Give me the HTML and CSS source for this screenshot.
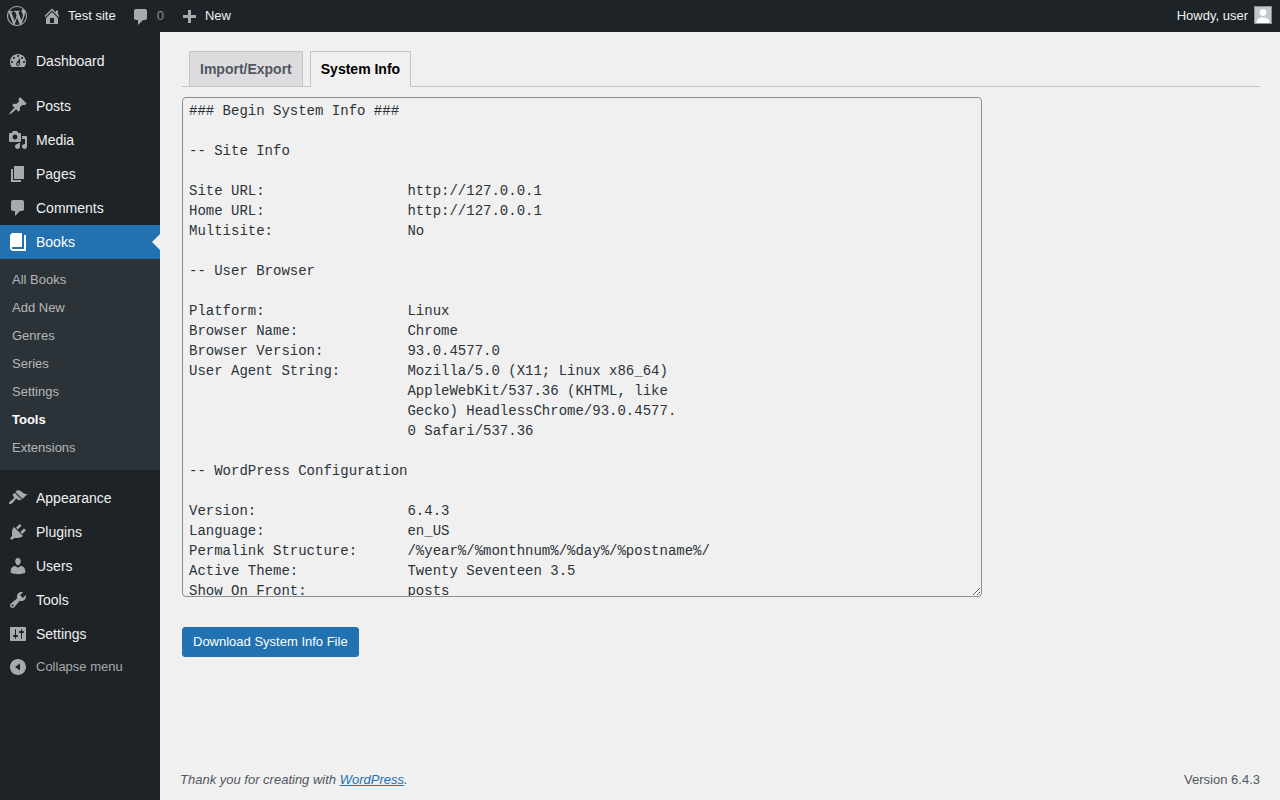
FILE: index.html
```html
<!DOCTYPE html>
<html>
<head>
  <meta charset="utf-8">
  <meta name="viewport" content="width=device-width, initial-scale=1.0">
  <title>System Info - Test site</title>
  <link rel="stylesheet" href="styles.css">
</head>
<body>
  <header class="adminbar">
    <a class="bar-item bar-logo" href="#">
      <svg class="bar-icon logo-icon" viewBox="0 0 20 20"><path d="M20 10c0-5.51-4.49-10-10-10C4.48 0 0 4.49 0 10c0 5.52 4.48 10 10 10 5.51 0 10-4.48 10-10zM7.78 15.37L4.37 6.22c.55-.02 1.17-.08 1.17-.08.5-.06.44-1.13-.06-1.11 0 0-1.45.11-2.37.11-.18 0-.37 0-.58-.01C4.12 2.69 6.87 1.11 10 1.11c2.33 0 4.45.87 6.05 2.34-.68-.11-1.65.39-1.65 1.58 0 .74.45 1.36.9 2.1.35.61.55 1.36.55 2.46 0 1.49-1.4 5-1.4 5l-3.03-8.37c.54-.02.82-.17.82-.17.5-.05.44-1.25-.06-1.22 0 0-1.44.12-2.38.12-.87 0-2.33-.12-2.33-.12-.5-.03-.56 1.2-.06 1.22l.92.08 1.26 3.41zM17.41 10c.24-.64.74-1.87.43-4.25.7 1.29 1.05 2.71 1.05 4.25 0 3.29-1.73 6.24-4.4 7.78.97-2.59 1.94-5.2 2.92-7.78zM6.1 18.09C3.12 16.65 1.11 13.53 1.11 10c0-1.3.23-2.48.72-3.59C3.25 10.3 4.67 14.2 6.1 18.09zm4.03-6.63l2.58 6.98c-.86.29-1.76.45-2.71.45-.79 0-1.57-.11-2.29-.33.81-2.38 1.62-4.74 2.42-7.1z"/></svg>
    </a>
    <a class="bar-item bar-site" href="#">
      <svg class="bar-icon" viewBox="0 0 20 20"><path fill-rule="evenodd" d="M16 8.5l1.53 1.53-1.06 1.06L10 4.62l-6.47 6.47-1.06-1.06L10 2.5l4 4v-2h2v4zm-6-2.46l6 5.99V18H4v-5.97zM12 17v-5H8v5h4z"/></svg>
      Test site
    </a>
    <a class="bar-item bar-comments" href="#">
      <svg class="bar-icon" viewBox="0 0 20 20"><path d="M5 2h9c1.1 0 2 .9 2 2v7c0 1.1-.9 2-2 2h-2l-5 5v-5H5c-1.1 0-2-.9-2-2V4c0-1.1.9-2 2-2z"/></svg>
      <span class="bar-count">0</span>
    </a>
    <a class="bar-item bar-new" href="#">
      <svg class="bar-icon" viewBox="0 0 20 20"><path d="M17 7v3h-5v5H9v-5H4V7h5V2h3v5h5z"/></svg>
      New
    </a>
    <a class="bar-item bar-account" href="#">
      Howdy, user
      <svg class="avatar" viewBox="0 0 16 16"><rect width="16" height="16" fill="#c6c7c9"/><circle cx="8" cy="5.6" r="3.3" fill="#fff"/><path d="M1.5 16c0-4 2.6-5.6 6.5-5.6s6.5 1.6 6.5 5.6z" fill="#fff"/></svg>
    </a>
  </header>

  <div class="layout">
    <nav class="sidebar">
      <ul class="menu">
        <li class="menu-item"><svg class="menu-icon" viewBox="0 0 20 20"><path fill-rule="evenodd" d="M3.76 16h12.48c1.1-1.37 1.76-3.11 1.76-5 0-4.42-3.58-8-8-8s-8 3.58-8 8c0 1.89.66 3.63 1.76 5zM10 4c.55 0 1 .45 1 1s-.45 1-1 1-1-.45-1-1 .45-1 1-1zM6 6c.55 0 1 .45 1 1s-.45 1-1 1-1-.45-1-1 .45-1 1-1zm8 0c.55 0 1 .45 1 1s-.45 1-1 1-1-.45-1-1 .45-1 1-1zm-5.37 5.55L12 7v6c0 1.1-.9 2-2 2s-2-.9-2-2c0-.57.24-1.08.63-1.45zM4 10c.55 0 1 .45 1 1s-.45 1-1 1-1-.45-1-1 .45-1 1-1zm12 0c.55 0 1 .45 1 1s-.45 1-1 1-1-.45-1-1 .45-1 1-1zm-5 3c0-.55-.45-1-1-1s-1 .45-1 1 .45 1 1 1 1-.45 1-1z"/></svg>Dashboard</li>
        <li class="menu-sep"></li>
        <li class="menu-item"><svg class="menu-icon" viewBox="0 0 20 20"><path d="M10.44 3.02l1.82-1.82 6.36 6.35-1.83 1.82c-1.05-.68-2.48-.57-3.41.36l-.75.75c-.92.93-1.04 2.35-.35 3.41l-1.83 1.82-2.41-2.41-2.8 2.79c-.42.42-3.38 2.71-3.8 2.29s1.86-3.39 2.28-3.81l2.79-2.79L4.1 9.36l1.83-1.82c1.05.69 2.48.57 3.4-.36l.75-.75c.93-.92 1.05-2.35.36-3.41z"/></svg>Posts</li>
        <li class="menu-item"><svg class="menu-icon" viewBox="0 0 20 20"><path fill-rule="evenodd" d="M13 11V4c0-.55-.45-1-1-1h-1.67L9 1H5L3.67 3H2c-.55 0-1 .45-1 1v7c0 .55.45 1 1 1h10c.55 0 1-.45 1-1zM7 4.5c1.38 0 2.5 1.12 2.5 2.5S8.38 9.5 7 9.5 4.5 8.38 4.5 7 5.62 4.5 7 4.5zM14 6h5v10.5c0 1.38-1.12 2.5-2.5 2.5S14 17.88 14 16.5s1.12-2.5 2.5-2.5c.17 0 .34.02.5.05V9h-3V6zm-4 8.05V13h2v3.5c0 1.38-1.12 2.5-2.5 2.5S7 17.88 7 16.5 8.12 14 9.5 14c.17 0 .34.02.5.05z"/></svg>Media</li>
        <li class="menu-item"><svg class="menu-icon" viewBox="0 0 20 20"><path d="M6 15V2h10v13H6zm-1 1h8v2H3V5h2v11z"/></svg>Pages</li>
        <li class="menu-item"><svg class="menu-icon" viewBox="0 0 20 20"><path d="M5 2h9c1.1 0 2 .9 2 2v7c0 1.1-.9 2-2 2h-2l-5 5v-5H5c-1.1 0-2-.9-2-2V4c0-1.1.9-2 2-2z"/></svg>Comments</li>
        <li class="menu-item menu-current"><svg class="menu-icon" viewBox="0 0 20 20"><path d="M16 3h2v16H5c-1.66 0-3-1.34-3-3V4c0-1.66 1.34-3 3-3h9v14H5c-.55 0-1 .45-1 1s.45 1 1 1h11V3z"/></svg>Books</li>
        <li>
          <ul class="submenu">
            <li>All Books</li>
            <li>Add New</li>
            <li>Genres</li>
            <li>Series</li>
            <li>Settings</li>
            <li class="submenu-current">Tools</li>
            <li>Extensions</li>
          </ul>
        </li>
        <li class="menu-sep"></li>
        <li class="menu-item"><svg class="menu-icon" viewBox="0 0 20 20"><path d="M14.48 11.06L7.41 3.99l1.5-1.5c.5-.56 2.3-.47 3.51.32 1.21.8 1.43 1.28 2.91 2.1 1.18.64 2.45 1.26 4.45.85zm-.71.71L6.7 4.7 4.93 6.47c-.39.39-.39 1.02 0 1.41l1.06 1.06c.39.39.39 1.03 0 1.42-.6.6-1.43 1.11-2.21 1.69-.35.26-.7.53-1.01.84C1.43 13.23.4 14.89 1.3 15.8c.9.91 2.53-.22 3.89-1.59.3-.31.6-.66.87-1.02.57-.78 1.07-1.6 1.67-2.21.39-.39 1.03-.39 1.42 0l1.06 1.07c.39.39 1.02.39 1.41 0z"/></svg>Appearance</li>
        <li class="menu-item"><svg class="menu-icon" viewBox="0 0 20 20"><path d="M13.11 4.36L9.87 7.6 8 5.73l3.24-3.24c.35-.34 1.05-.2 1.56.32.52.51.66 1.21.31 1.55zm-8 1.77l.91-1.12 9.01 9.01-1.19.84c-.71.71-2.63 1.16-3.82 1.16H6.14L4.9 17.26c-.59.59-1.54.59-2.12 0-.59-.58-.59-1.53 0-2.12l1.24-1.24v-3.88c0-1.13.4-3.19 1.09-3.89zm7.26 3.97l3.24-3.24c.34-.35 1.04-.21 1.55.31.52.51.66 1.21.31 1.55l-3.24 3.25z"/></svg>Plugins</li>
        <li class="menu-item"><svg class="menu-icon" viewBox="0 0 20 20"><path d="M10 9.25c-2.27 0-2.73-3.44-2.73-3.44C7 4.02 7.82 2 9.97 2c2.16 0 2.98 2.02 2.71 3.81 0 0-.41 3.44-2.68 3.44zm0 2.57L12.72 10c2.39 0 4.52 2.33 4.52 4.53v2.49s-3.65 1.13-7.24 1.13c-3.65 0-7.24-1.13-7.24-1.13v-2.49c0-2.25 1.94-4.48 4.47-4.48z"/></svg>Users</li>
        <li class="menu-item"><svg class="menu-icon" viewBox="0 0 20 20"><path fill-rule="evenodd" d="M16.68 9.77c-1.34 1.34-3.3 1.67-4.95.99l-5.41 6.52c-.99.99-2.59.99-3.58 0s-.99-2.59 0-3.57l6.52-5.42c-.68-1.65-.35-3.61.99-4.95 1.28-1.28 3.12-1.62 4.72-1.06l-2.89 2.89 2.82 2.82 2.86-2.87c.53 1.58.18 3.39-1.08 4.65zM3.81 16.21c.4.39 1.04.39 1.43 0 .4-.4.4-1.04 0-1.43-.39-.4-1.03-.4-1.43 0-.39.39-.39 1.03 0 1.43z"/></svg>Tools</li>
        <li class="menu-item"><svg class="menu-icon" viewBox="0 0 20 20"><path fill-rule="evenodd" d="M18 16V4c0-.55-.45-1-1-1H3c-.55 0-1 .45-1 1v12c0 .55.45 1 1 1h14c.55 0 1-.45 1-1zM8 11h1c.55 0 1 .45 1 1s-.45 1-1 1H8v1.5c0 .28-.22.5-.5.5s-.5-.22-.5-.5V13H6c-.55 0-1-.45-1-1s.45-1 1-1h1V5.5c0-.28.22-.5.5-.5s.5.22.5.5V11zm5-2h-1c-.55 0-1-.45-1-1s.45-1 1-1h1V5.5c0-.28.22-.5.5-.5s.5.22.5.5V7h1c.55 0 1 .45 1 1s-.45 1-1 1h-1v5.5c0 .28-.22.5-.5.5s-.5-.22-.5-.5V9z"/></svg>Settings</li>
        <li class="menu-item menu-collapse"><svg class="menu-icon" viewBox="0 0 20 20"><path fill-rule="evenodd" d="M10 2c4.4 0 8 3.6 8 8s-3.6 8-8 8-8-3.6-8-8 3.6-8 8-8zm2 4.5L7 10l5 3.5z"/></svg>Collapse menu</li>
      </ul>
    </nav>

    <main class="content">
      <div class="wrap">
        <div class="tabs">
          <a class="tab" href="#">Import/Export</a>
          <a class="tab tab-active" href="#">System Info</a>
        </div>
        <textarea class="sysinfo" readonly>### Begin System Info ###

-- Site Info

Site URL:                 http://127.0.0.1
Home URL:                 http://127.0.0.1
Multisite:                No

-- User Browser

Platform:                 Linux
Browser Name:             Chrome
Browser Version:          93.0.4577.0
User Agent String:        Mozilla/5.0 (X11; Linux x86_64)
                          AppleWebKit/537.36 (KHTML, like
                          Gecko) HeadlessChrome/93.0.4577.
                          0 Safari/537.36

-- WordPress Configuration

Version:                  6.4.3
Language:                 en_US
Permalink Structure:      /%year%/%monthnum%/%day%/%postname%/
Active Theme:             Twenty Seventeen 3.5
Show On Front:            posts
Page On Front:            n/a
</textarea>
        <button class="download-btn" type="button">Download System Info File</button>
      </div>
      <footer class="footer">
        <span class="footer-thanks">Thank you for creating with <a href="#">WordPress</a>.</span>
        <span>Version 6.4.3</span>
      </footer>
    </main>
  </div>
</body>
</html>
```

FILE: styles.css
```css
*, *::before, *::after {
  box-sizing: border-box;
  margin: 0;
  padding: 0;
}

html, body {
  height: 800px;
  overflow: hidden;
}

body {
  font-family: "Liberation Sans", Arial, sans-serif;
  font-size: 13px;
  background-color: #f0f0f1;
  color: #3c434a;
}

a {
  text-decoration: none;
}

ul {
  list-style: none;
}

/* top bar */
.adminbar {
  height: 32px;
  background-color: #1d2327;
  color: #f0f0f1;
  display: flex;
  align-items: flex-start;
}

.bar-item {
  display: flex;
  align-items: center;
  height: 30px;
  color: #f0f0f1;
}

.bar-icon {
  fill: #a7aaad;
  width: 20px;
  height: 20px;
  margin-top: 2px;
}

.logo-icon {
  margin-left: 7px;
}

.bar-site {
  margin-left: 15px;
}

.bar-site .bar-icon {
  margin-right: 6px;
}

.bar-comments {
  margin-left: 15px;
}

.bar-comments .bar-icon {
  margin-top: 4px;
}

.bar-count {
  margin-left: 6px;
  color: #8c8f94;
}

.bar-new {
  margin-left: 15px;
}

.bar-new .bar-icon {
  margin-top: 6px;
  margin-right: 6px;
}

.bar-account {
  margin-left: auto;
  margin-right: 8px;
}

.avatar {
  width: 18px;
  height: 18px;
  margin-left: 6px;
  border: 1px solid #8c8f94;
}

/* sidebar */
.layout {
  display: flex;
  height: 768px;
}

.sidebar {
  width: 160px;
  flex-shrink: 0;
  background-color: #1d2327;
  padding-top: 12px;
}

.menu-item {
  position: relative;
  display: flex;
  align-items: center;
  height: 34px;
  padding-left: 8px;
  font-size: 14px;
  color: #f0f0f1;
}

.menu-icon {
  width: 20px;
  height: 20px;
  margin-right: 8px;
  fill: #a7aaad;
}

.menu-sep {
  height: 11px;
}

.menu-current {
  background-color: #2271b1;
  color: #fff;
}

.menu-current .menu-icon {
  fill: #fff;
}

.menu-current::after {
  content: "";
  position: absolute;
  right: 0;
  top: 9px;
  border: 8px solid transparent;
  border-right-color: #f0f0f1;
  border-left-width: 0;
}

.submenu {
  background-color: #2c3338;
  padding: 7px 0 8px;
}

.submenu li {
  height: 28px;
  line-height: 28px;
  padding-left: 12px;
  color: #c3c4c7;
  opacity: 0.9;
}

.submenu .submenu-current {
  color: #fff;
  font-weight: 600;
  opacity: 1;
}

.menu-collapse {
  font-size: 13px;
  color: #a7aaad;
  height: 30px;
}

.menu-collapse .menu-icon {
  margin-top: 2px;
}

/* main area */
.content {
  flex: 1;
  display: flex;
  flex-direction: column;
  padding: 0 20px;
}

.wrap {
  flex: 1;
  margin-left: 2px;
  padding-top: 19px;
}

.tabs {
  display: flex;
  gap: 7px;
  padding-left: 7px;
  border-bottom: 1px solid #c3c4c7;
  height: 36px;
}

.tab {
  height: 36px;
  padding: 5px 10px;
  border: 1px solid #c3c4c7;
  background-color: #dcdcde;
  color: #50575e;
  font-size: 14px;
  font-weight: 600;
  line-height: 24px;
}

.tab-active {
  background-color: #f0f0f1;
  border-bottom-color: #f0f0f1;
  color: #000;
}

.sysinfo {
  display: block;
  width: 800px;
  height: 500px;
  margin-top: 10px;
  padding: 3px 6px 2px;
  border: 1px solid #8c8f94;
  border-radius: 4px;
  background-color: #f0f0f1;
  color: #2c3338;
  font-family: "Liberation Mono", "Courier New", monospace;
  font-size: 14px;
  line-height: 20px;
  overflow: hidden;
  white-space: pre;
  outline: none;
}

.download-btn {
  display: block;
  height: 30px;
  margin-top: 30px;
  padding: 0 10px 2px;
  border: 1px solid #2271b1;
  border-radius: 3px;
  background-color: #2271b1;
  color: #fff;
  font-family: inherit;
  font-size: 13px;
  cursor: pointer;
}

.footer {
  display: flex;
  justify-content: space-between;
  height: 30px;
  color: #50575e;
  line-height: 20px;
}

.footer-thanks {
  font-style: italic;
}

.footer-thanks a {
  color: #2271b1;
  text-decoration: underline;
}
```
